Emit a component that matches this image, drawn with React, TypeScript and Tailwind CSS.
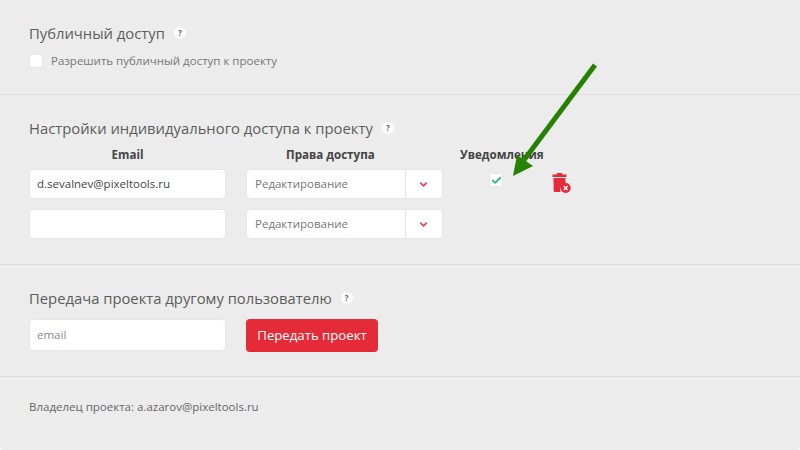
import { ChevronDown, Check } from 'lucide-react';

function Help() {
  return (
    <span className="ml-[9px] flex h-[12px] w-[12px] items-center justify-center rounded-full bg-white text-[8px] font-bold leading-none text-[#666]">
      ?
    </span>
  );
}

function Title({ children }: { children: string }) {
  return (
    <div className="flex h-[22px] items-center">
      <h2 className="text-[14.8px] font-normal leading-[22px] text-[#5c5c5c]">{children}</h2>
      <Help />
    </div>
  );
}

function AccessSelect() {
  return (
    <div className="flex h-[30px] w-[197px] rounded-[4px] border border-[#e6e6e6] bg-white">
      <div className="flex-1 pl-[8px] text-[11.5px] leading-[28px] text-[#777]">Редактирование</div>
      <div className="flex w-[37px] items-center justify-center border-l border-[#e3e3e3] pr-[2px]">
        <ChevronDown className="h-[11px] w-[11px] text-[#e8404b]" strokeWidth={3.5} />
      </div>
    </div>
  );
}

function TextBox({ value }: { value?: string }) {
  return (
    <div className="h-[30px] w-[197px] rounded-[4px] border border-[#e6e6e6] bg-white pl-[7px] text-[11.5px] leading-[28px] text-[#444]">
      {value}
    </div>
  );
}

function TrashIcon() {
  return (
    <svg width="20" height="22" viewBox="0 0 20 22">
      <path d="M4.5 2.5 L5 1 H10 L10.5 2.5 H14.5 V5 H0.5 V2.5 Z" fill="#e52b38" />
      <path d="M1.5 6 H13.5 V12 A6 6 0 0 0 8.5 20 H3 Q1.8 20 1.7 19 Z" fill="#e52b38" />
      <circle cx="13.7" cy="16" r="5" fill="#e52b38" />
      <path d="M11.8 14.1 L15.6 17.9 M15.6 14.1 L11.8 17.9" stroke="#fff" strokeWidth="1.4" />
    </svg>
  );
}

export default function App() {
  return (
    <div className="relative h-[450px] w-[800px] overflow-hidden bg-white font-['Open_Sans',sans-serif]">
      <div className="h-full rounded-b-[4px] bg-[#ececec]">
        {/* Public access */}
        <section className="h-[95px] border-b border-[#dedede] pl-[29px] pt-[22px]">
          <Title>Публичный доступ</Title>
          <label className="mt-[9px] flex items-center">
            <span className="h-[14px] w-[14px] rounded-[2px] border border-[#e6e6e6] bg-white" />
            <span className="ml-[8px] text-[11.5px] leading-[16px] text-[#777]">
              Разрешить публичный доступ к проекту
            </span>
          </label>
        </section>

        {/* Individual access */}
        <section className="h-[170px] border-b border-[#dedede] pl-[29px] pt-[22px]">
          <Title>Настройки индивидуального доступа к проекту</Title>
          <div className="mt-[6px] flex text-[11.6px] font-bold leading-[20px] text-[#444]">
            <div className="w-[197px] text-center">Email</div>
            <div className="ml-[60px] w-[157px]">Права доступа</div>
            <div className="ml-[17px] whitespace-nowrap">Уведомления</div>
          </div>
          <div className="mt-[4px] flex flex-col gap-[10px]">
            <div className="flex">
              <TextBox value="d.sevalnev@pixeltools.ru" />
              <div className="ml-[20px]">
                <AccessSelect />
              </div>
              <span className="ml-[46px] mt-[4px] flex h-[14px] w-[14px] items-center justify-center rounded-[2px] border border-[#e6e6e6] bg-white">
                <Check className="h-[11px] w-[11px] text-[#2bbb8f]" strokeWidth={4} />
              </span>
              <div className="ml-[49px] mt-[3px]">
                <TrashIcon />
              </div>
            </div>
            <div className="flex">
              <TextBox />
              <div className="ml-[20px]">
                <AccessSelect />
              </div>
            </div>
          </div>
        </section>

        {/* Transfer */}
        <section className="h-[112px] border-b border-[#dedede] pl-[29px] pt-[22px]">
          <Title>Передача проекта другому пользователю</Title>
          <div className="mt-[10px] flex">
            <div className="h-[32px] w-[197px] rounded-[4px] border border-[#e6e6e6] bg-white pl-[7px] text-[11.5px] leading-[30px] text-[#8a8a8a]">
              email
            </div>
            <button className="ml-[20px] h-[33px] w-[132px] rounded-[4px] bg-[#e52b38] text-[13.2px] text-white">
              Передать проект
            </button>
          </div>
        </section>

        {/* Owner */}
        <div className="pl-[29px] pt-[22px] text-[11.5px] leading-[16px] text-[#666]">
          Владелец проекта: a.azarov@pixeltools.ru
        </div>
      </div>

      {/* Annotation arrow */}
      <svg className="absolute left-0 top-0" width="800" height="450" viewBox="0 0 800 450">
        <path d="M595 65 L524 160" stroke="#278100" strokeWidth="5" fill="none" />
        <path d="M513 176 L517 155 L533 166 Z" fill="#278100" />
      </svg>
    </div>
  );
}
